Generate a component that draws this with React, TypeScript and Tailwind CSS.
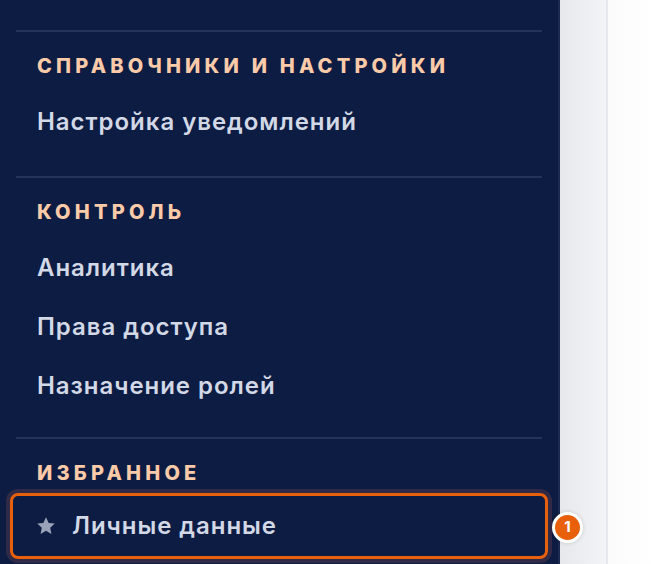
import React from 'react';

const sections = [
  { title: 'Справочники и настройки', items: ['Настройка уведомлений'] },
  { title: 'Контроль', items: ['Аналитика', 'Права доступа', 'Назначение ролей'] },
];

const StarIcon: React.FC<{ className?: string }> = ({ className }) => (
  <svg viewBox="0 0 24 24" className={className} fill="currentColor">
    <path d="M12 2.5l2.9 6.1 6.6.8-4.9 4.6 1.3 6.6L12 17.3l-5.9 3.3 1.3-6.6-4.9-4.6 6.6-.8z" />
  </svg>
);

const App: React.FC = () => {
  return (
    <div className="relative flex h-[564px] w-[660px] overflow-hidden bg-white font-['Inter',sans-serif]">
      <aside className="h-full w-[560px] shrink-0 border-r-2 border-[#1c2a50] bg-[#0c1c42] px-4 pt-[30px]">
        {sections.map((section, i) => (
          <div key={section.title} className={i === 0 ? '' : 'mt-[25px]'}>
            <div className="h-[2px] bg-[#243358]" />
            <h3 className="mt-6 h-5 whitespace-nowrap px-[21px] text-[20px] font-extrabold uppercase leading-5 tracking-[0.21em] text-[#fbcaa9]">
              {section.title}
            </h3>
            <ul className="mt-4">
              {section.items.map(item => (
                <li key={item} className="h-[59px] px-[21px] text-[24px] font-semibold leading-[59px] tracking-[0.04em] text-[#d3d8e6]">
                  {item}
                </li>
              ))}
            </ul>
          </div>
        ))}
        <div className="mt-[22px]">
          <div className="h-[2px] bg-[#243358]" />
          <h3 className="mt-6 h-5 px-[21px] text-[20px] font-extrabold uppercase leading-5 tracking-[0.21em] text-[#fbcaa9]">
            Избранное
          </h3>
          <div className="-mx-[6px] mt-[10px] flex h-[66px] items-center gap-[15px] rounded-lg border-[3px] border-[#e8600c] px-[22px] shadow-[0_0_0_4px_rgba(120,70,80,0.35)]">
            <StarIcon className="h-[22px] w-[22px] text-[#9aa3b8]" />
            <span className="text-[24px] font-semibold tracking-[0.04em] text-[#d3d8e6]">Личные данные</span>
          </div>
        </div>
      </aside>
      <div className="h-full w-[48px] shrink-0 border-r-2 border-[#e4e8ee] bg-gradient-to-r from-[#e6e8ec] to-[#f3f4f7]" />
      <div className="h-full flex-1 bg-gradient-to-r from-[#fbfbfc] to-white" />
      <div className="absolute left-[552px] top-[512px] flex h-[31px] w-[31px] items-center justify-center rounded-full border-[3px] border-white bg-[#e8600c] text-[15px] font-bold text-white shadow-[0_0_4px_rgba(0,0,0,0.15)]">
        1
      </div>
    </div>
  );
};

export default App;
